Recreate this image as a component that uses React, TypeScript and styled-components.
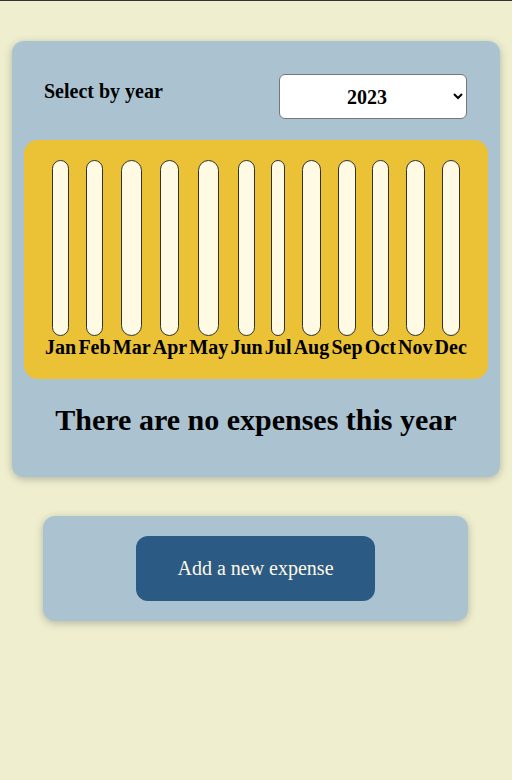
import React from "react";
import styled, { createGlobalStyle } from "styled-components";

const Global = createGlobalStyle`
  html, body { margin: 0; padding: 0; }
  body {
    background: #efefd0;
    font-family: "Liberation Serif", "Times New Roman", serif;
    border-top: 1px solid #333;
    min-height: 779px;
  }
`;

const Page = styled.main`
  padding: 40px 12px;
  display: flex;
  flex-direction: column;
  gap: 39px;
`;

const Card = styled.section`
  background: #abc3d1;
  border-radius: 12px;
  box-shadow: 0 2px 8px rgba(0, 0, 0, 0.25);
  padding: 12px 12px 0;
`;

const FilterRow = styled.div`
  display: flex;
  justify-content: space-between;
  align-items: center;
  padding: 21px 21px 21px 20px;
`;

const FilterLabel = styled.label`
  font-weight: bold;
  font-size: 20px;
  margin-bottom: 11px;
  color: #000;
`;

const YearSelect = styled.select`
  width: 188px;
  height: 45px;
  font-family: "Liberation Serif", "Times New Roman", serif;
  font-weight: bold;
  font-size: 20px;
  text-align: center;
  text-align-last: center;
  background: #fff;
  border: 1px solid #767676;
  border-radius: 6px;
  color: #000;
`;

const Chart = styled.div`
  background: #ebc136;
  border-radius: 14px;
  padding: 20px;
  display: flex;
  justify-content: space-around;
`;

const BarColumn = styled.div`
  display: flex;
  flex-direction: column;
  align-items: center;
`;

const BarTrack = styled.div`
  height: 176px;
  width: 55%;
  box-sizing: border-box;
  border: 1px solid #313131;
  border-radius: 12px;
  background: #fffae4;
  overflow: hidden;
  display: flex;
  flex-direction: column;
  justify-content: flex-end;
`;

const BarFill = styled.div`
  background: #2b5b84;
  width: 100%;
`;

const BarLabel = styled.div`
  font-weight: bold;
  font-size: 20px;
  color: #000;
`;

const Empty = styled.h2`
  font-size: 30px;
  font-weight: bold;
  text-align: center;
  margin: 24px 0 40px;
  color: #000;
`;

const ActionCard = styled.section`
  margin-left: 31px;
  width: 425px;
  box-sizing: border-box;
  background: #abc3d1;
  border-radius: 12px;
  box-shadow: 0 2px 8px rgba(0, 0, 0, 0.25);
  padding: 20px;
  display: flex;
  justify-content: center;
`;

const AddButton = styled.button`
  font-family: "Liberation Serif", "Times New Roman", serif;
  font-size: 20px;
  color: #fff8e6;
  background: #2b5b84;
  border: none;
  border-radius: 12px;
  padding: 21px 41px;
  line-height: 23px;
  cursor: pointer;
`;

const months = ["Jan", "Feb", "Mar", "Apr", "May", "Jun", "Jul", "Aug", "Sep", "Oct", "Nov", "Dec"];

export default function App() {
  return (
    <>
      <Global />
      <Page>
        <Card>
          <FilterRow>
            <FilterLabel>Select by year</FilterLabel>
            <YearSelect defaultValue="2023">
              <option value="2023">2023</option>
              <option value="2022">2022</option>
              <option value="2021">2021</option>
              <option value="2020">2020</option>
            </YearSelect>
          </FilterRow>
          <Chart>
            {months.map((m) => (
              <BarColumn key={m}>
                <BarTrack>
                  <BarFill style={{ height: "0%" }} />
                </BarTrack>
                <BarLabel>{m}</BarLabel>
              </BarColumn>
            ))}
          </Chart>
          <Empty>There are no expenses this year</Empty>
        </Card>
        <ActionCard>
          <AddButton>Add a new expense</AddButton>
        </ActionCard>
      </Page>
    </>
  );
}
